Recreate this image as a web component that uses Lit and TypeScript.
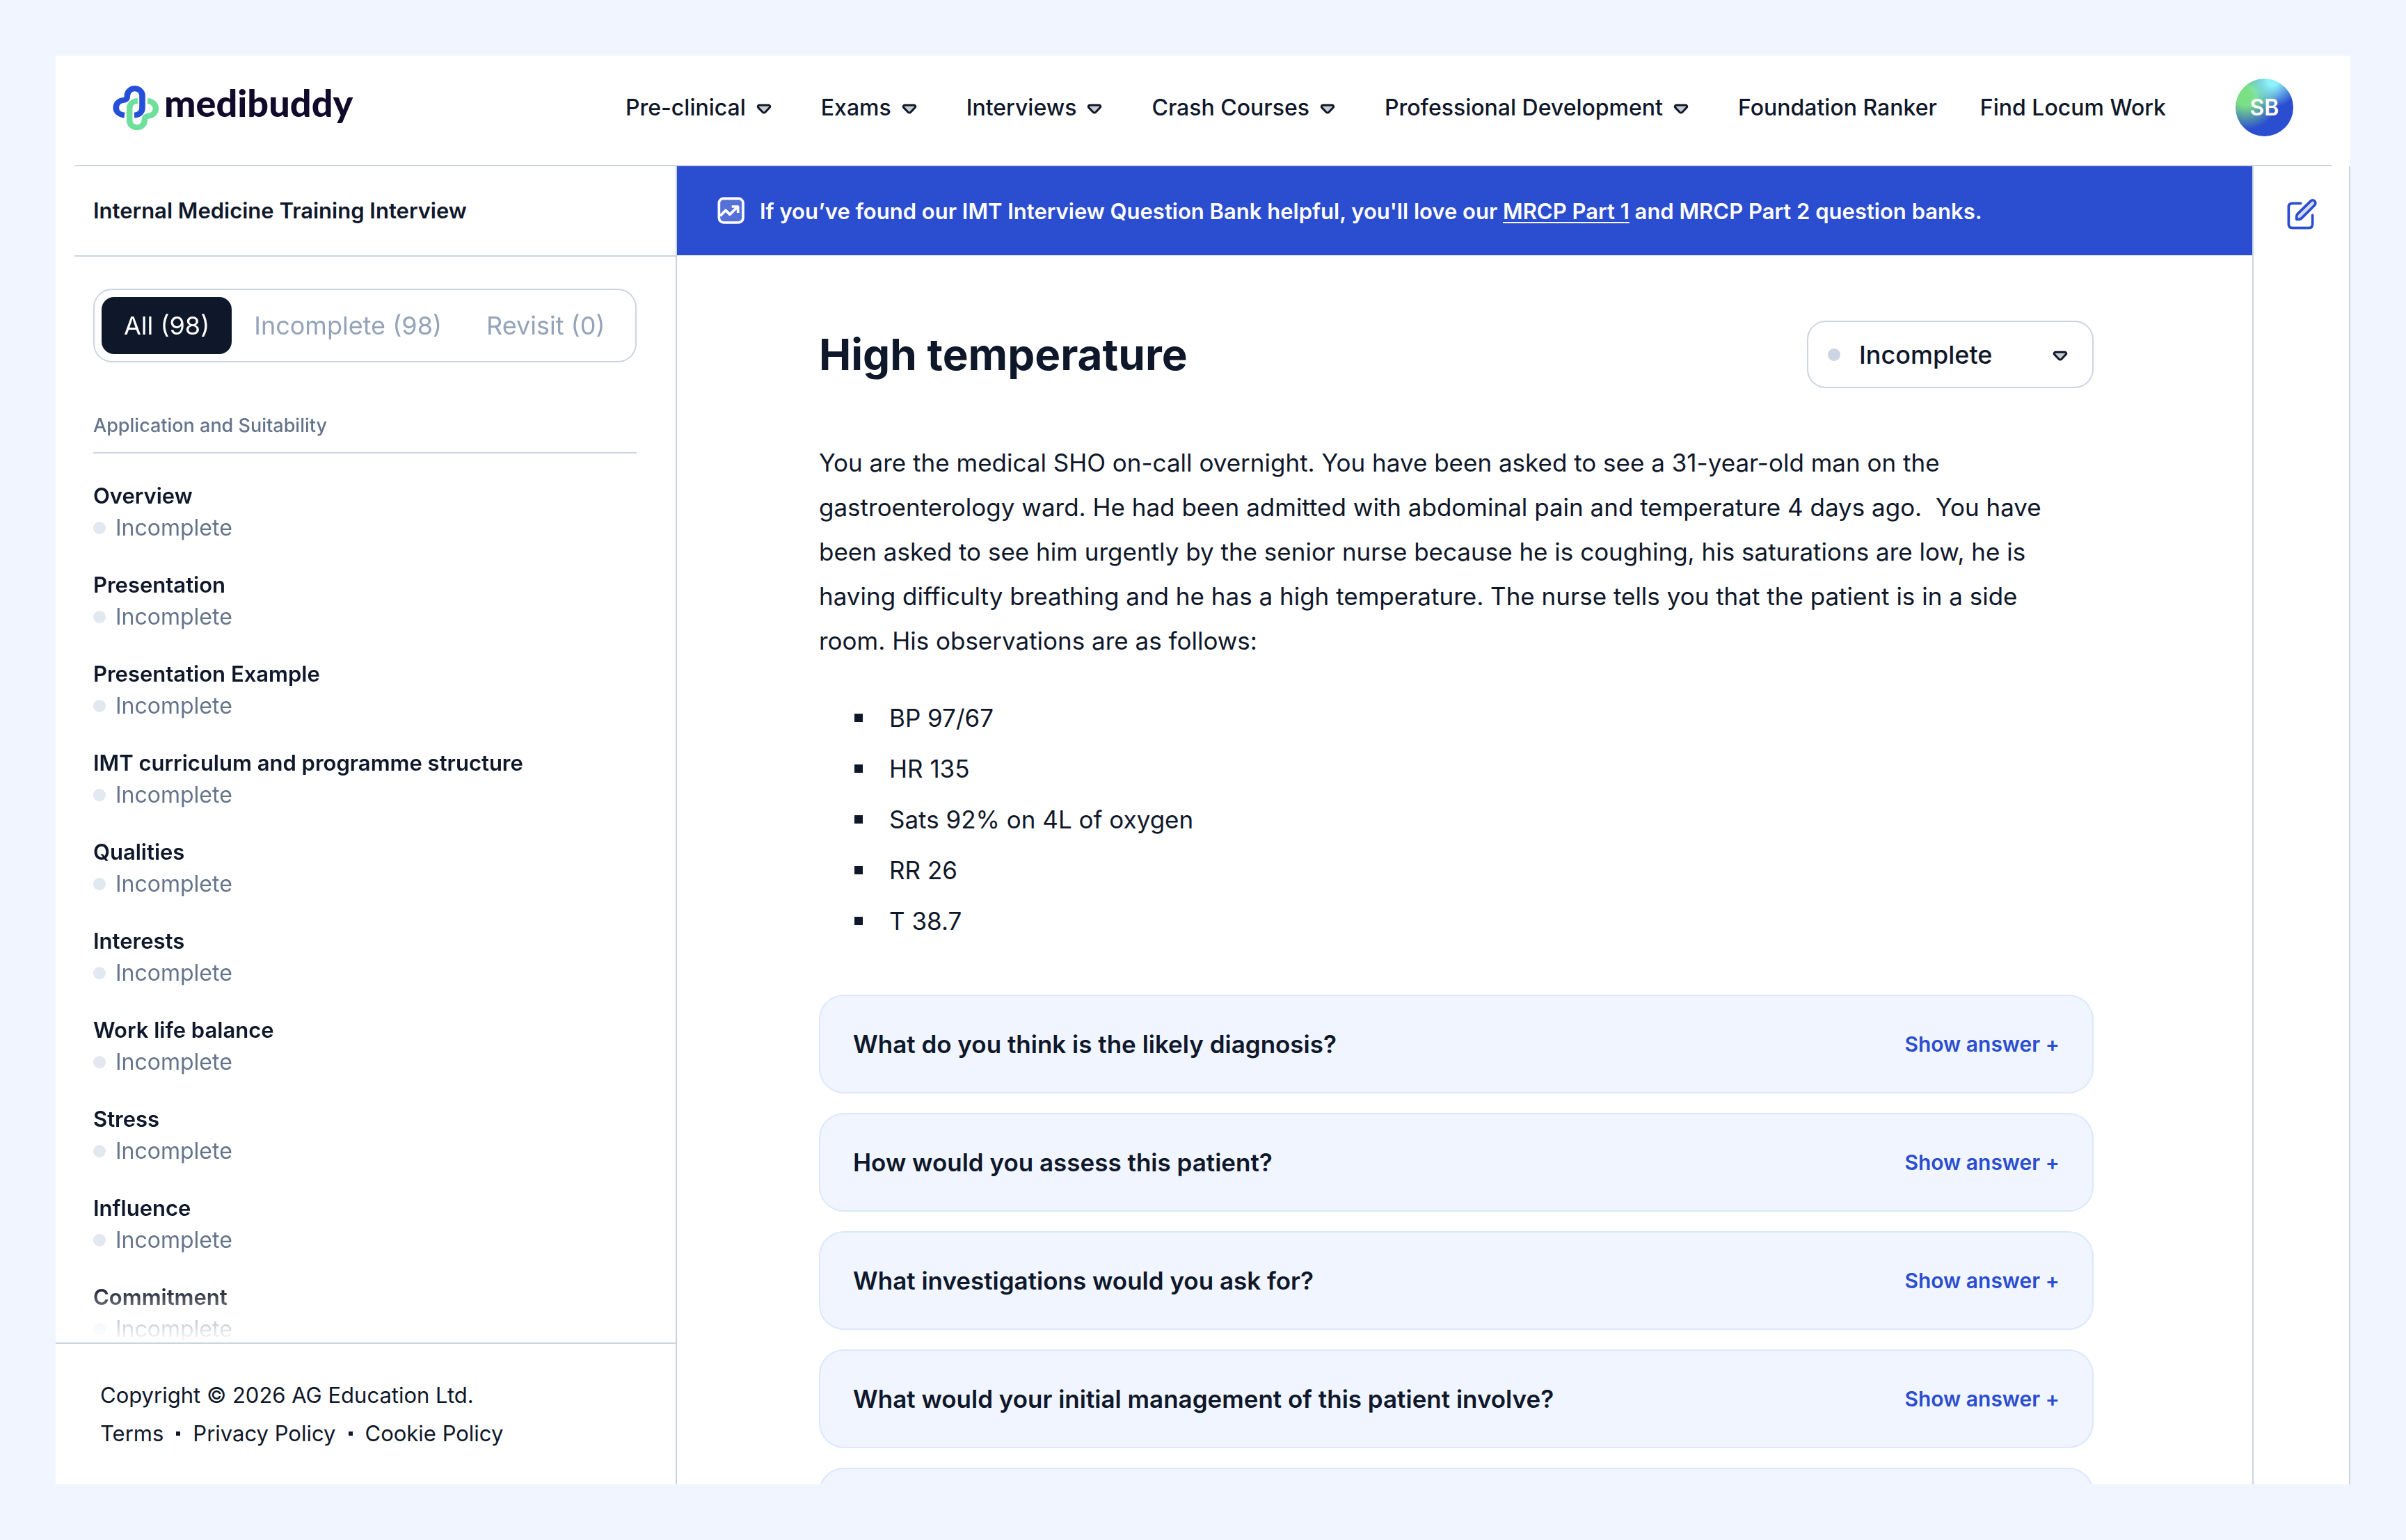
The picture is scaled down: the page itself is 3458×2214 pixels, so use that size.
import { LitElement, html, css, nothing } from "lit";
import { customElement, property, state } from "lit/decorators.js";
import { classMap } from "lit/directives/class-map.js";

const chevron = html`<svg class="chevron" viewBox="0 0 40 40" aria-hidden="true">
  <path
    d="M13.2 16.3h13.6c1.8 0 2.6 2 1.4 3.3l-6.3 6.6c-1 1-2.8 1-3.8 0l-6.3-6.6c-1.2-1.3-.4-3.3 1.4-3.3z"
    fill="#0f172a"
    fill-opacity="0.22"
    stroke="#0f172a"
    stroke-width="3"
    stroke-linejoin="round"
  />
</svg>`;

const chevronStyles = css`
  .chevron {
    display: block;
    flex: none;
    width: 40px;
    height: 40px;
  }
`;

const resets = css`
  *,
  *::before,
  *::after {
    box-sizing: border-box;
  }
  h1,
  h2,
  h3,
  p,
  ul {
    margin: 0;
    padding: 0;
  }
  ul {
    list-style: none;
  }
  button,
  select {
    margin: 0;
    padding: 0;
    border: 0;
    background: none;
    color: inherit;
    font: inherit;
    text-align: left;
    cursor: pointer;
  }
  a {
    color: inherit;
    text-decoration: none;
  }
`;

@customElement("site-header")
export class SiteHeader extends LitElement {
  static styles = [
    resets,
    chevronStyles,
    css`
      :host {
        display: block;
      }
      .bar {
        display: flex;
        align-items: center;
        height: 159px;
        margin: 0 27px;
        padding: 0 55px 8px 54px;
        border-bottom: 2px solid #cbd5e1;
      }
      .logo {
        display: flex;
        align-items: flex-start;
        gap: 6px;
        color: #120a2b;
        font: 900 54px/52px Lato, sans-serif;
      }
      .mark {
        display: block;
        width: 69px;
        height: 66px;
      }
      .nav {
        display: flex;
        align-items: center;
        gap: 62px;
        margin-left: auto;
        font-weight: 500;
        line-height: 40px;
        white-space: nowrap;
      }
      .menu {
        display: flex;
        align-items: center;
        gap: 6px;
      }
      .avatar {
        display: flex;
        align-items: center;
        justify-content: center;
        width: 83px;
        height: 83px;
        margin-left: 100px;
        border-radius: 50%;
        color: #fff;
        font-weight: 600;
        background:
          radial-gradient(circle at 64% 4%, #8cf1f8 0 8%, #8cf1f800 40%),
          radial-gradient(circle at 18% 30%, #7bdf86 0 16%, #7bdf8600 54%),
          #2b4dd0;
      }
    `,
  ];

  private menus = ["Pre-clinical", "Exams", "Interviews", "Crash Courses", "Professional Development"];
  private links = ["Foundation Ranker", "Find Locum Work"];

  render() {
    return html`<header class="bar">
      <a class="logo" href="#">
        <svg
          class="mark"
          viewBox="282 183 192 198"
          preserveAspectRatio="none"
          fill="none"
          stroke-width="24"
          aria-hidden="true"
        >
          <path
            stroke="#6fe09c"
            d="M424 252C444 254 457 268 457 285C457 303 444 316 427 317C417 318 412 324 412 337A30 30 0 0 1 352 337V284C352 265 366 253 385 252"
          />
          <path
            stroke="#264fd9"
            d="M332 314C311 312 298 298 298 281C298 263 311 250 328 249C339 248 343 242 343 229A30 30 0 0 1 403 229V283C403 301 390 313 371 314"
          />
        </svg>
        <span>medibuddy</span>
      </a>
      <nav class="nav">
        ${this.menus.map((m) => html`<button class="menu" type="button">${m}${chevron}</button>`)}
        ${this.links.map((l) => html`<a href="#">${l}</a>`)}
      </nav>
      <button class="avatar" type="button">SB</button>
    </header>`;
  }
}

@customElement("question-sidebar")
export class QuestionSidebar extends LitElement {
  static styles = [
    resets,
    css`
      :host {
        display: flex;
        flex-direction: column;
        min-height: 0;
        border-right: 2px solid #cbd5e1;
      }
      .title {
        flex: none;
        margin-left: 27px;
        padding: 0 27px;
        border-bottom: 2px solid #cbd5e1;
        font-size: 31px;
        font-weight: 600;
        line-height: 128px;
      }
      .scroll {
        flex: 1;
        min-height: 0;
        overflow: hidden;
        padding: 46px 56px 0 54px;
        mask-image: linear-gradient(to bottom, #000 calc(100% - 82px), transparent);
      }
      .tabs {
        display: flex;
        padding: 10px;
        border: 2px solid #cbd5e1;
        border-radius: 27px;
        font-size: 36px;
        line-height: 82px;
      }
      .tab {
        padding: 0 32px;
        border-radius: 18px;
        color: #94a3b8;
        white-space: nowrap;
      }
      .tab.active {
        background: #0f172a;
        color: #fff;
      }
      .section {
        margin-top: 71px;
        padding-bottom: 18px;
        border-bottom: 2px solid #cbd5e1;
        color: #64748b;
        font-size: 27px;
        font-weight: 500;
        line-height: 40px;
      }
      .stations {
        display: flex;
        flex-direction: column;
        gap: 36px;
        padding-top: 38px;
        line-height: 46px;
      }
      .station {
        display: block;
        font-size: 31px;
        font-weight: 600;
      }
      .status {
        display: flex;
        align-items: center;
        gap: 14px;
        color: #64748b;
      }
      .dot {
        width: 18px;
        height: 18px;
        border-radius: 50%;
        background: #e2e8f0;
      }
      .foot {
        flex: none;
        padding: 46px 64px;
        border-top: 2px solid #cbd5e1;
        font-size: 31px;
        line-height: 55px;
      }
      .legal {
        display: flex;
        align-items: center;
        gap: 18px;
      }
      .sep {
        width: 6px;
        height: 6px;
        background: #0f172a;
      }
    `,
  ];

  @state() private active = 0;

  private tabs = ["All (98)", "Incomplete (98)", "Revisit (0)"];
  private stations = [
    "Overview",
    "Presentation",
    "Presentation Example",
    "IMT curriculum and programme structure",
    "Qualities",
    "Interests",
    "Work life balance",
    "Stress",
    "Influence",
    "Commitment",
  ];
  private legal = ["Terms", "Privacy Policy", "Cookie Policy"];

  render() {
    return html`
      <h2 class="title">Internal Medicine Training Interview</h2>
      <div class="scroll">
        <div class="tabs" role="tablist">
          ${this.tabs.map(
            (t, i) => html`<button
              type="button"
              role="tab"
              aria-selected=${i === this.active}
              class=${classMap({ tab: true, active: i === this.active })}
              @click=${() => (this.active = i)}
            >${t}</button>`,
          )}
        </div>
        <h3 class="section">Application and Suitability</h3>
        <ul class="stations">
          ${this.stations.map(
            (s) => html`<li>
              <a class="station" href="#">${s}</a>
              <span class="status"><span class="dot"></span>Incomplete</span>
            </li>`,
          )}
        </ul>
      </div>
      <footer class="foot">
        <p>Copyright © 2026 AG Education Ltd.</p>
        <div class="legal">
          ${this.legal.map(
            (l, i) => html`${i ? html`<span class="sep"></span>` : nothing}<a href="#">${l}</a>`,
          )}
        </div>
      </footer>
    `;
  }
}

@customElement("question-card")
export class QuestionCard extends LitElement {
  static styles = [
    resets,
    css`
      :host {
        display: block;
      }
      .card {
        display: flex;
        align-items: center;
        justify-content: space-between;
        width: 100%;
        min-height: 142px;
        padding: 0 47px;
        border: 2px solid #dbe8fd;
        border-radius: 36px;
        background: #f0f5ff;
      }
      .question {
        font-size: 35px;
        font-weight: 600;
      }
      .toggle {
        color: #2b4dd0;
        font-size: 30px;
        font-weight: 600;
      }
    `,
  ];

  @property() question = "";

  render() {
    if (!this.question) return html`<div class="card"></div>`;
    return html`<button class="card" type="button">
      <span class="question">${this.question}</span>
      <span class="toggle">Show answer +</span>
    </button>`;
  }
}

@customElement("question-page")
export class QuestionPage extends LitElement {
  static styles = [
    resets,
    chevronStyles,
    css`
      :host {
        display: block;
        min-height: 0;
        overflow: hidden;
        border-right: 2px solid #cbd5e1;
      }
      .banner {
        display: flex;
        align-items: center;
        gap: 20px;
        min-height: 128px;
        padding: 0 57px;
        background: #2b4dd0;
        color: #fff;
        font-size: 31px;
        font-weight: 600;
      }
      .trend {
        flex: none;
        display: block;
        width: 42px;
        height: 42px;
      }
      .link {
        text-decoration: underline;
        text-decoration-thickness: 2px;
        text-underline-offset: 4px;
      }
      .frame {
        padding: 94px 24px 0 0;
      }
      .article {
        max-width: 1832px;
        margin: 0 auto;
        font-size: 35px;
        line-height: 64px;
      }
      .head {
        display: flex;
        align-items: center;
        justify-content: space-between;
      }
      .heading {
        font-size: 62px;
        font-weight: 700;
        line-height: 80px;
      }
      .picker {
        display: grid;
        grid-template-columns: 18px 1fr 40px;
        align-items: center;
        column-gap: 27px;
        width: 412px;
        height: 97px;
        padding: 0 26px 0 28px;
        border: 2px solid #cbd5e1;
        border-radius: 27px;
      }
      .dot {
        width: 18px;
        height: 18px;
        border-radius: 50%;
        background: #cbd5e1;
      }
      .select {
        grid-area: 1 / 2 / 2 / 4;
        appearance: none;
        height: 64px;
        font-size: 36px;
        font-weight: 500;
      }
      .picker .chevron {
        grid-area: 1 / 3;
        pointer-events: none;
      }
      .text {
        margin-top: 75px;
        padding-right: 24px;
      }
      .observations {
        display: flex;
        flex-direction: column;
        gap: 9px;
        margin-top: 47px;
        padding-left: 51px;
      }
      .observation {
        display: flex;
        align-items: center;
        gap: 38px;
      }
      .observation::before {
        content: "";
        width: 12px;
        height: 12px;
        background: #0f172a;
      }
      .cards {
        display: flex;
        flex-direction: column;
        gap: 28px;
        margin-top: 74px;
      }
    `,
  ];

  private observations = ["BP 97/67", "HR 135", "Sats 92% on 4L of oxygen", "RR 26", "T 38.7"];
  private questions = [
    "What do you think is the likely diagnosis?",
    "How would you assess this patient?",
    "What investigations would you ask for?",
    "What would your initial management of this patient involve?",
    "",
  ];

  render() {
    return html`
      <div class="banner">
        <svg class="trend" viewBox="210 158 126 126" fill="none" stroke="#fff" aria-hidden="true">
          <rect x="220" y="168" width="104" height="104" rx="20" fill="#fff" fill-opacity="0.2" stroke-width="11" />
          <path
            d="M225 243L249 219L267 237L301 203M275 203H302V230"
            stroke-width="11"
            stroke-linejoin="round"
          />
        </svg>
        <p>
          If you’ve found our IMT Interview Question Bank helpful, you'll love our
          <a class="link" href="#">MRCP Part 1</a> and MRCP Part 2 question banks.
        </p>
      </div>
      <div class="frame">
        <article class="article">
          <div class="head">
            <h1 class="heading">High temperature</h1>
            <label class="picker">
              <span class="dot"></span>
              <select class="select" aria-label="Incomplete">
                <option>Incomplete</option>
              </select>
              ${chevron}
            </label>
          </div>
          <p class="text">
            You are the medical SHO on-call overnight. You have been asked to see a 31-year-old man on the
            gastroenterology ward. He had been admitted with abdominal pain and temperature 4 days ago.&nbsp; You have
            been asked to see him urgently by the senior nurse because he is coughing, his saturations are low, he is
            having difficulty breathing and he has a high temperature. The nurse tells you that the patient is in a side
            room. His observations are as follows:
          </p>
          <ul class="observations">
            ${this.observations.map((o) => html`<li class="observation">${o}</li>`)}
          </ul>
          <div class="cards">
            ${this.questions.map((q) => html`<question-card .question=${q}></question-card>`)}
          </div>
        </article>
      </div>
    `;
  }
}

@customElement("app-root")
export class AppRoot extends LitElement {
  static styles = [
    resets,
    css`
      :host {
        display: flex;
        flex-direction: column;
        box-sizing: border-box;
        height: 100vh;
        padding: 80px;
        background: #f0f5ff;
        color: #0f172a;
        font-family: Inter, "Liberation Sans", sans-serif;
        font-size: 32px;
      }
      .panel {
        display: flex;
        flex: 1;
        flex-direction: column;
        min-height: 0;
        overflow: hidden;
        background: #fff;
      }
      .body {
        display: grid;
        flex: 1;
        grid-template-columns: 893px minmax(0, 1fr) 139px;
        grid-template-rows: minmax(0, 1fr);
        min-height: 0;
      }
      .rail {
        display: flex;
        justify-content: center;
        padding-top: 45px;
        border-right: 2px solid #cbd5e1;
      }
      .note {
        display: block;
        width: 48px;
        height: 48px;
      }
    `,
  ];

  render() {
    return html`<div class="panel">
      <site-header></site-header>
      <div class="body">
        <question-sidebar></question-sidebar>
        <question-page></question-page>
        <aside class="rail">
          <button class="note" type="button">
            <svg
              class="note"
              viewBox="280 552 144 144"
              fill="none"
              stroke="#2b4dd0"
              stroke-width="11"
              stroke-linecap="round"
              stroke-linejoin="round"
              aria-hidden="true"
            >
              <path d="M348 577H312Q296 577 296 593V667Q296 683 312 683H383Q399 683 399 667V628" />
              <path
                d="M330 646V633C330 628 332 625 335 622L390 568C396 562 404 563 408 567C412 571 413 579 408 585L352 641C349 644 346 646 341 646Z"
                fill="#2b4dd0"
                fill-opacity="0.2"
              />
            </svg>
          </button>
        </aside>
      </div>
    </div>`;
  }
}
